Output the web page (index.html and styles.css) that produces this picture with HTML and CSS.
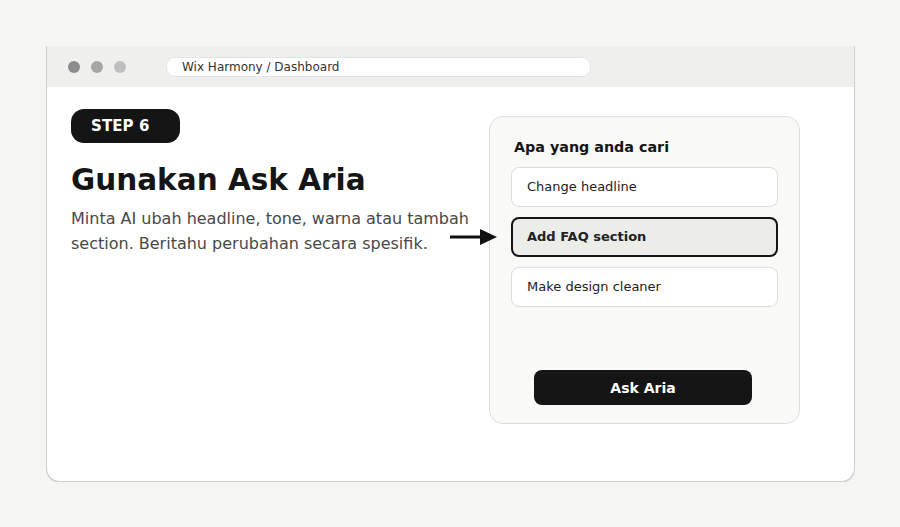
FILE: index.html
```html
<!DOCTYPE html>
<html lang="id">
<head>
  <meta charset="UTF-8">
  <title>Step 6 - Ask Aria</title>
  <link rel="stylesheet" href="styles.css">
</head>
<body>

<div class="window">
  <div class="titlebar">
    <div class="dots">
      <span class="dot dot-1"></span>
      <span class="dot dot-2"></span>
      <span class="dot dot-3"></span>
    </div>
    <div class="url">Wix Harmony / Dashboard</div>
  </div>

  <div class="content">
    <div class="intro">
      <div class="step">STEP 6</div>
      <h1>Gunakan Ask Aria</h1>
      <p>Minta AI ubah headline, tone, warna atau tambah section. Beritahu perubahan secara spesifik.</p>
    </div>

    <div class="panel">
      <svg class="arrow" width="48" height="20" viewBox="0 0 48 20">
        <line x1="0" y1="10" x2="34" y2="10" stroke="#111" stroke-width="3"/>
        <polygon points="30,2 47,10 30,18" fill="#111"/>
      </svg>
      <div class="panel-title">Apa yang anda cari</div>
      <div class="options">
        <div class="option">Change headline</div>
        <div class="option selected">Add FAQ section</div>
        <div class="option">Make design cleaner</div>
      </div>
      <button class="ask">Ask Aria</button>
    </div>
  </div>
</div>

</body>
</html>
```

FILE: styles.css
```css
body {
  margin: 0;
  background-color: #f5f5f3;
  font-family: "DejaVu Sans", Verdana, sans-serif;
  color: #151515;
}
.window {
  margin: 46px 0 0 46px;
  width: 807px;
  height: 435px;
  background-color: #fff;
  border: 1px solid #cfcfcd;
  border-top: none;
  border-radius: 0 0 14px 14px;
  box-shadow: 0 1px 0 #d6d6d4;
  display: flex;
  flex-direction: column;
  overflow: hidden;
}
.titlebar {
  height: 41px;
  background-color: #efefed;
  display: flex;
  align-items: center;
  padding-left: 21px;
}
.dots {
  display: flex;
  gap: 11px;
}
.dot {
  width: 12px;
  height: 12px;
  border-radius: 50%;
}
.dot-1 { background-color: #8c8c8c; }
.dot-2 { background-color: #a6a6a6; }
.dot-3 { background-color: #bebebe; }
.url {
  margin-left: 40px;
  width: 408px;
  height: 18px;
  background-color: #fff;
  border: 1px solid #e4e4e2;
  border-radius: 9px;
  padding-left: 15px;
  font-size: 12px;
  line-height: 18px;
  color: #333;
}
.content {
  flex: 1;
  display: flex;
  justify-content: space-between;
  padding: 22px 54px 0 24px;
}
.intro {
  width: 410px;
}
.step {
  display: inline-block;
  background-color: #151515;
  color: #fff;
  font-weight: bold;
  font-size: 15px;
  letter-spacing: 0.1px;
  height: 34px;
  line-height: 34px;
  padding: 0 30px 0 20px;
  border-radius: 13px;
}
h1 {
  font-size: 29.5px;
  margin: 19px 0 8px;
  line-height: 36px;
}
p {
  margin: 0;
  font-size: 16px;
  line-height: 25px;
  color: #484848;
}
.panel {
  position: relative;
  margin-top: 7px;
  width: 267px;
  height: 306px;
  background-color: #f9f9f7;
  border: 1px solid #dcdcda;
  border-radius: 14px;
  padding: 0 21px;
  display: flex;
  flex-direction: column;
}
.arrow {
  position: absolute;
  left: -40px;
  top: 110px;
}
.panel-title {
  font-weight: bold;
  font-size: 14.3px;
  margin: 22px 0 0 3px;
  height: 28px;
}
.options {
  display: flex;
  flex-direction: column;
  gap: 10px;
}
.option {
  height: 38px;
  line-height: 38px;
  background-color: #fff;
  border: 1px solid #dcdcda;
  border-radius: 8px;
  padding-left: 15px;
  font-size: 13px;
  color: #222;
}
.option.selected {
  background-color: #ececE8;
  border: 2px solid #151515;
  height: 36px;
  line-height: 36px;
  padding-left: 14px;
  font-weight: bold;
}
.ask {
  margin: auto 0 18px 23px;
  width: 218px;
  height: 35px;
  border: none;
  border-radius: 8px;
  background-color: #151515;
  color: #fff;
  font-family: inherit;
  font-weight: bold;
  font-size: 14px;
}
```
